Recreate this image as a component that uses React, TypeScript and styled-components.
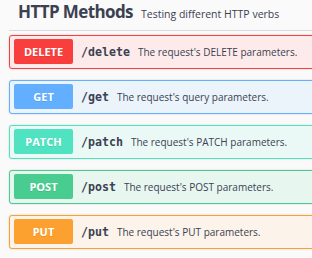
import React from 'react';
import styled, { createGlobalStyle } from 'styled-components';

const GlobalStyle = createGlobalStyle`
  html, body {
    margin: 0;
    padding: 0;
    background: #fafafa;
    overflow: hidden;
  }
  body {
    font-family: "Open Sans", "Noto Sans", sans-serif;
    color: #3b4151;
  }
`;

type Method = 'delete' | 'get' | 'patch' | 'post' | 'put';

const COLORS: Record<Method, { main: string; bg: string }> = {
  delete: { main: '#f93e3e', bg: '#fdebeb' },
  get: { main: '#61affe', bg: '#ebf3fb' },
  patch: { main: '#50e3c2', bg: '#ebf9f6' },
  post: { main: '#49cc90', bg: '#e8f6f0' },
  put: { main: '#fca130', bg: '#fcf3ea' },
};

const Page = styled.div`
  width: 340px;
  padding: 0 0 0 9px;
`;

const TagHeader = styled.div`
  display: flex;
  align-items: baseline;
  height: 25px;
  padding: 0 0 5px 9px;
  border-bottom: 1px solid #d9dadd;
  margin-bottom: 4px;
  box-sizing: content-box;
`;

const TagTitle = styled.h3`
  margin: 0;
  font-size: 17px;
  line-height: 23px;
  font-weight: 700;
  letter-spacing: -0.6px;
  color: #3b4151;
`;

const TagDesc = styled.small`
  margin-left: 8px;
  font-size: 10.5px;
  color: #3b4151;
`;

const Block = styled.div<{ $method: Method }>`
  display: flex;
  align-items: center;
  height: 25px;
  padding: 3px 4px 4px;
  margin-bottom: 11px;
  border: 1px solid ${(p) => COLORS[p.$method].main};
  border-radius: 3px;
  background: ${(p) => COLORS[p.$method].bg};
  box-shadow: 0 0 2px rgba(0, 0, 0, 0.19);
`;

const Badge = styled.span<{ $method: Method }>`
  display: flex;
  align-items: center;
  justify-content: center;
  width: 59px;
  height: 25px;
  flex-shrink: 0;
  border-radius: 2px;
  background: ${(p) => COLORS[p.$method].main};
  color: #fff;
  font-size: 11px;
  font-weight: 700;
  text-shadow: 0 1px 0 rgba(0, 0, 0, 0.1);
`;

const Path = styled.span`
  margin-left: 8px;
  font-family: "DejaVu Sans Mono", monospace;
  font-size: 11.6px;
  font-weight: 700;
  color: #3b4151;
`;

const Summary = styled.span`
  margin-left: 8px;
  font-size: 10px;
  color: #3b4151;
  white-space: nowrap;
`;

const OPS: { method: Method; path: string; summary: string }[] = [
  { method: 'delete', path: '/delete', summary: "The request's DELETE parameters." },
  { method: 'get', path: '/get', summary: "The request's query parameters." },
  { method: 'patch', path: '/patch', summary: "The request's PATCH parameters." },
  { method: 'post', path: '/post', summary: "The request's POST parameters." },
  { method: 'put', path: '/put', summary: "The request's PUT parameters." },
];

export default function App() {
  return (
    <Page>
      <GlobalStyle />
      <TagHeader>
        <TagTitle>HTTP Methods</TagTitle>
        <TagDesc>Testing different HTTP verbs</TagDesc>
      </TagHeader>
      {OPS.map((op) => (
        <Block key={op.method} $method={op.method}>
          <Badge $method={op.method}>{op.method.toUpperCase()}</Badge>
          <Path>{op.path}</Path>
          <Summary>{op.summary}</Summary>
        </Block>
      ))}
    </Page>
  );
}
